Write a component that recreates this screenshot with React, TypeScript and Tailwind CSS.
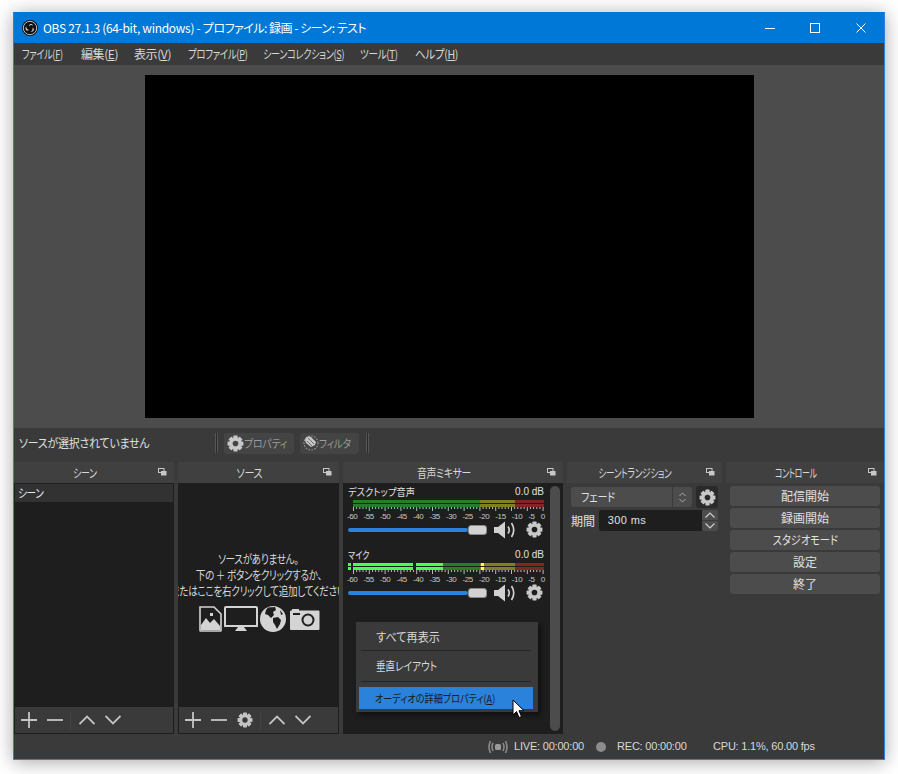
import React from "react";

const font = "font-['Noto_Sans_CJK_JP','Noto_Sans',sans-serif] [font-feature-settings:'palt']";

function Gear({ size = 18, color = "#c8c8c8", hole = "#2a2a2a" }: { size?: number; color?: string; hole?: string }) {
  const teeth = [0, 45, 90, 135];
  return (
    <svg width={size} height={size} viewBox="0 0 24 24" className="shrink-0">
      {teeth.map((a) => (
        <rect key={a} x="9" y="0.800" width="6" height="22.400" rx="1" fill={color} transform={`rotate(${a} 12 12)`} />
      ))}
      <circle cx="12" cy="12" r="8.600" fill={color} />
      <circle cx="12" cy="12" r="4" fill={hole} />
    </svg>
  );
}

function Speaker() {
  return (
    <svg width="24" height="18" viewBox="0 0 24 18" className="shrink-0">
      <path d="M1 6h4l7-5.500v17l-7-5.500H1z" fill="#d0d0d0" />
      <path d="M15 5.500q2.500 3.500 0 7" stroke="#d0d0d0" strokeWidth="1.700" fill="none" />
      <path d="M18.500 2q4.500 7 0 14" stroke="#d0d0d0" strokeWidth="1.700" fill="none" />
    </svg>
  );
}

function DockIcon() {
  return (
    <svg width="9" height="8" viewBox="0 0 9 8" className="shrink-0">
      <rect x="0.500" y="0.500" width="5.500" height="4" fill="#3f3f3f" stroke="#c8c8c8" />
      <rect x="3" y="3" width="5.500" height="4.500" fill="#c8c8c8" />
    </svg>
  );
}

function Dock({ title, className, children }: { title: React.ReactNode; className: string; children: React.ReactNode }) {
  return (
    <div className={`flex flex-col ${className}`}>
      <div className="h-[21px] shrink-0 bg-[#404040] flex items-center justify-center relative pr-[19px] text-[12px] leading-none text-[#d8d8d8] tracking-[-0.4px] whitespace-nowrap">
        {title}
        <span className="absolute right-[7px] top-[6px]"><DockIcon /></span>
      </div>
      {children}
    </div>
  );
}

function Glyph({ d }: { d: string }) {
  return (
    <svg width="16" height="16" viewBox="0 0 16 16" className="shrink-0">
      <path d={d} stroke="#c4c4c4" strokeWidth="1.800" fill="none" />
    </svg>
  );
}

function FooterBar({ gear }: { gear?: boolean }) {
  return (
    <div className="h-[27px] shrink-0 bg-[#3a3a3a] border border-t-0 border-[#1e1e1e] flex items-center pl-[6px]">
      <Glyph d="M8 0v16M0 8h16" />
      <span className="ml-[10px]"><Glyph d="M0 8h16" /></span>
      {gear && <span className="ml-[10px]"><Gear size={16} color="#c4c4c4" hole="#3a3a3a" /></span>}
      <span className="w-px h-[19px] bg-[#444] ml-[7px]" />
      <span className="ml-[8px]"><Glyph d="M0.500 12l7.500-7.500 7.500 7.500" /></span>
      <span className="ml-[10px]"><Glyph d="M0.500 4l7.500 7.500 7.500-7.500" /></span>
    </div>
  );
}

function Meter({ active }: { active?: boolean }) {
  const labels = ["-60", "-55", "-50", "-45", "-40", "-35", "-30", "-25", "-20", "-15", "-10", "-5", "0"];
  return (
    <div className="relative">
      <div className="h-[7px] flex flex-col justify-between ml-[10px] w-[191px]">
        {[0, 1].map((i) => (
          <div key={i} className="h-[3px] flex relative">
            <div className="w-[127px] bg-[#267f26]" />
            <div className="w-[35px] bg-[#7f7f26]" />
            <div className="w-[29px] bg-[#7f2626]" />
            {active && (
              <>
                <div className="absolute left-0 top-0 h-full w-[90px] bg-[#4cff4c]" />
                <div className="absolute left-[128px] top-0 h-full w-[3px] bg-[#ffff4c]" />
              </>
            )}
          </div>
        ))}
        {active && (
          <>
            <div className="absolute left-[5px] top-0 w-[3px] h-[3px] bg-[#4cff4c]" />
            <div className="absolute left-[5px] top-[4px] w-[3px] h-[3px] bg-[#4cff4c]" />
            <div className="absolute left-[8px] top-0 w-[2px] h-[7px] bg-[#1e1e1e]" />
            <div className="absolute left-[70px] top-0 w-[3px] h-[7px] bg-[#1e1e1e]" />
          </>
        )}
      </div>
      <svg width="192" height="4" viewBox="0 0 192 4" className="block ml-[10px]">
        {Array.from({ length: 61 }).map((_, i) => (
          <rect key={i} x={i * 3.16} y="0" width="1" height={i % 5 === 0 ? 4 : 2} fill="#b8b8b8" />
        ))}
      </svg>
      <div className="flex justify-between w-[198px] text-[8px] leading-[9px] text-[#c8c8c8] ml-[4px] mt-[1px] tracking-[-0.4px] font-['Liberation_Sans',sans-serif]">
        {labels.map((l) => <span key={l}>{l}</span>)}
      </div>
    </div>
  );
}

function Channel({ name, active, extra }: { name: React.ReactNode; active?: boolean; extra?: string }) {
  return (
    <div className={extra}>
      <div className="flex justify-between h-[13px] items-center pl-[5px] pr-[6px] text-[10px] text-[#e0e0e0]">
        {name}
        <span className="font-['Liberation_Sans',sans-serif]">0.0 dB</span>
      </div>
      <div className="mt-[2px]"><Meter active={active} /></div>
      <div className="flex items-center h-[17px] pl-[5px]">
        <div className="w-[120px] h-[4px] rounded-full bg-[#2a82da]" />
        <div className="w-[19px] h-[10px] rounded-[3px] bg-[#d2d2d2] border border-[#8a8a8a]" />
        <span className="ml-[6px]"><Speaker /></span>
        <span className="ml-[9px]"><Gear size={17} color="#c8c8c8" hole="#1e1e1e" /></span>
      </div>
    </div>
  );
}

function ControlButton({ children }: { children: React.ReactNode }) {
  return (
    <div className="h-[20px] rounded-[3px] bg-[#4c4c4c] flex items-center justify-center text-[12px] leading-none text-[#e0e0e0]">{children}</div>
  );
}

function SourceIcons() {
  const c = "#d4d4d4";
  const h = "#1e1e1e";
  return (
    <div className="flex items-center mt-[7px] ml-[2px]">
      <svg width="23" height="26" viewBox="0 0 23 26" className="shrink-0">
        <path d="M1 1h14l7 7v16.500a.5.5 0 0 1-.5.500H1.500a.5.5 0 0 1-.5-.500z" fill={h} stroke={c} strokeWidth="1.600" />
        <path d="M2 24v-5l5-7 4 5 4-4 6 7v4z" fill={c} />
        <rect x="11" y="7" width="3" height="3" fill={c} />
      </svg>
      <svg width="34" height="26" viewBox="0 0 34 26" className="ml-[2px] shrink-0">
        <rect x="1" y="1" width="32" height="19" rx="1" fill={h} stroke={c} strokeWidth="2" />
        <path d="M0 20h34v1H0zM14 21h6l3 4H11z" fill={c} />
      </svg>
      <svg width="26" height="26" viewBox="0 0 26 26" className="ml-[2px] shrink-0">
        <circle cx="13" cy="13" r="13" fill={c} />
        <path d="M8 1.500l7-.5 1 3-3 2 1 3-3 3-3-3-3-1 1-4zM13 12l5-1 3 3-1 4-3 5-2-4-2-3zM20 4l3 4-2 1z" fill={h} />
      </svg>
      <svg width="31" height="22" viewBox="0 0 31 22" className="ml-[3px] shrink-0">
        <path d="M1 3.500a1 1 0 0 1 1-1h1v-1.500h7v1.500h19.500a1 1 0 0 1 1 1V21a1 1 0 0 1-1 1H2a1 1 0 0 1-1-1z" fill={c} />
        <circle cx="19" cy="12" r="5.500" fill={c} stroke={h} strokeWidth="2" />
        <rect x="4" y="5" width="7" height="2" fill={h} />
      </svg>
    </div>
  );
}

export default function App() {
  return (
    <div className={`w-[898px] h-[774px] bg-white pl-[13px] pt-[12px] ${font}`}>
      <div className="w-[872px] h-[748px] flex flex-col border border-[#2a82da] border-t-[#0078d7] shadow-[0_2px_18px_rgba(0,0,0,0.35)] bg-[#3a3a3a]">
        <div className="h-[30px] shrink-0 bg-[#0078d7] flex items-center text-white pl-[8px] text-[12px]">
          <svg width="16" height="16" viewBox="0 0 16 16" className="shrink-0">
            <circle cx="8" cy="8" r="8" fill="#111" />
            <circle cx="8" cy="8" r="6.700" fill="none" stroke="#e8e8e8" strokeWidth="0.800" />
            <path d="M8 4.200a3 3 0 0 1 3.400 1.600a3.600 3.600 0 0 0-4.600 0.500a3 3 0 0 1 1.200-2.100z" fill="#e8e8e8" />
            <path d="M11.900 9.600a3 3 0 0 1-3.300 2.200a3.600 3.600 0 0 0 1.900-4.200a3 3 0 0 1 1.400 2z" fill="#e8e8e8" />
            <path d="M4.200 10.300a3 3 0 0 1 0-4a3.600 3.600 0 0 0 2.700 3.700a3 3 0 0 1-2.700 0.300z" fill="#e8e8e8" />
          </svg>
          <span className="ml-[5px] tracking-[-0.3px] whitespace-nowrap">OBS 27.1.3 (64-bit, windows) - <span className="tracking-[-0.5px]">プロファイル: 録画 - シーン: テスト</span></span>
          <div className="ml-auto flex items-center">
            <span className="w-[10px] h-px bg-white" />
            <span className="w-[10px] h-[10px] border border-white ml-[35px]" />
            <svg width="10" height="10" viewBox="0 0 10 10" className="ml-[36px] mr-[18px]">
              <path d="M0.500 0.500l9 9M9.500 0.500l-9 9" stroke="#fff" strokeWidth="1" />
            </svg>
          </div>
        </div>
        <div className="h-[22px] shrink-0 bg-[#3a3a3a] flex items-center text-[12px] text-[#d8d8d8] tracking-[-0.4px] whitespace-nowrap">
          <span className="ml-[8px] w-[41px] origin-left scale-x-[0.76]">ファイル(<u>F</u>)</span>
          <span className="ml-[18px] w-[36px]">編集(<u>E</u>)</span>
          <span className="ml-[17px] w-[38px]">表示(<u>V</u>)</span>
          <span className="ml-[16px] w-[59px] origin-left scale-x-[0.78]">プロファイル(<u>P</u>)</span>
          <span className="ml-[16px] w-[80px] origin-left scale-x-[0.76]">シーンコレクション(<u>S</u>)</span>
          <span className="ml-[17px] w-[38px] origin-left scale-x-[0.8]">ツール(<u>T</u>)</span>
          <span className="ml-[17px] w-[43px] origin-left scale-x-[0.88]">ヘルプ(<u>H</u>)</span>
        </div>
        <div className="h-[363px] shrink-0 bg-[#4c4c4c] pl-[131px] pt-[10px]">
          <div className="w-[609px] h-[343px] bg-black" />
        </div>
        <div className="h-[30px] shrink-0 bg-[#3a3a3a] flex items-center text-[#e0e0e0] whitespace-nowrap">
          <span className="ml-[5px] w-[196px] text-[12px] tracking-[-0.2px] origin-left scale-x-[0.91]">ソースが選択されていません</span>
          <span className="w-[3px] h-[20px] bg-[#2a2a2a] border-x border-[#555]" />
          <div className="ml-[6px] w-[70px] h-[21px] rounded-[3px] bg-[#444] flex items-center pl-[3px] text-[11px] text-[#9a9a9a] tracking-[-0.2px]">
            <Gear size={17} color="#c8c8c8" hole="#444" />
            <span className="origin-left scale-x-[0.9]">プロパティ</span>
          </div>
          <div className="ml-[6px] w-[59px] h-[21px] rounded-[3px] bg-[#444] flex items-center pl-[3px] text-[11px] text-[#9a9a9a] tracking-[-0.2px]">
            <svg width="16" height="16" viewBox="0 0 16 16" className="shrink-0">
              <circle cx="8" cy="8" r="7" fill="none" stroke="#999" strokeWidth="1.200" strokeDasharray="1.500 1.500" />
              <path d="M2 5a4 4 0 0 1 6-3l5 5-1 3-4 2-5-4z" fill="#c8c8c8" />
              <path d="M5 3l6 6M4 6l5 5" stroke="#444" strokeWidth="0.700" />
            </svg>
            <span className="origin-left scale-x-[0.87]">フィルタ</span>
          </div>
          <span className="ml-[7px] w-[3px] h-[20px] bg-[#2a2a2a] border-x border-[#555]" />
        </div>
        <div className="mt-[4px] h-[272px] shrink-0 flex gap-[4px] relative">
          <Dock title={<span className="scale-x-[0.75]">シーン</span>} className="w-[160px]">
            <div className="flex-1 bg-[#1e1e1e] border border-[#1e1e1e] border-b-0">
              <div className="h-[18px] bg-[#323232] flex items-center pl-[3px] text-[12px] text-[#e8e8e8] tracking-[-0.4px]">
                <span className="origin-left scale-x-[0.8]">シーン</span>
              </div>
            </div>
            <FooterBar />
          </Dock>
          <Dock title={<span className="scale-x-[0.84]">ソース</span>} className="w-[161px]">
            <div className="flex-1 bg-[#1e1e1e] flex flex-col items-center pt-[68px] overflow-hidden">
              <div className="text-[12px] leading-[16px] text-[#d8d8d8] text-center tracking-[-0.4px] whitespace-nowrap w-full flex flex-col items-center">
                <span className="scale-x-[0.8]">ソースがありません。</span>
                <span className="scale-x-[0.8]">下の ＋ ボタンをクリックするか、</span>
                <div className="w-[161px] flex justify-center overflow-hidden">
                  <span className="shrink-0 scale-x-[0.8]">またはここを右クリックして追加してください</span>
                </div>
              </div>
              <SourceIcons />
            </div>
            <FooterBar gear />
          </Dock>
          <Dock title={<span className="scale-x-[0.82]">音声ミキサー</span>} className="w-[220px]">
            <div className="flex-1 bg-[#1e1e1e] flex">
              <div className="flex-1 pt-[2px]">
                <Channel name={<span className="tracking-[0.1px] origin-left scale-x-[0.92]">デスクトップ音声</span>} />
                <Channel name={<span className="tracking-[0.1px] origin-left scale-x-[0.8]">マイク</span>} active extra="mt-[10px]" />
              </div>
              <div className="w-[10px] mr-[3px] mt-[3px] mb-[3px] bg-[#4c4c4c] rounded-full" />
            </div>
          </Dock>
          <Dock title={<span className="scale-x-[0.72]">シーントランジション</span>} className="w-[155px]">
            <div className="flex-1 bg-[#3a3a3a] px-[4px] pt-[3px] text-[12px] text-[#e0e0e0]">
              <div className="flex items-center gap-[4px]">
                <div className="w-[121px] h-[20px] rounded-[3px] bg-[#4c4c4c] flex items-center pl-[10px]">
                  <span className="flex-1 origin-left scale-x-[0.83]">フェード</span>
                  <span className="w-[20px] h-full border-l border-[#3a3a3a] flex flex-col items-center justify-center gap-[3px]">
                    <svg width="7" height="4" viewBox="0 0 7 4"><path d="M0.500 4l3-3 3 3" stroke="#aaa" fill="none" /></svg>
                    <svg width="7" height="4" viewBox="0 0 7 4"><path d="M0.500 0l3 3 3-3" stroke="#aaa" fill="none" /></svg>
                  </span>
                </div>
                <span className="w-[22px] h-[22px] rounded-[3px] bg-[#2a2a2a] flex items-center justify-center"><Gear size={17} color="#c8c8c8" hole="#2a2a2a" /></span>
              </div>
              <div className="flex items-center mt-[2px]">
                <span className="w-[28px]">期間</span>
                <div className="w-[104px] h-[21px] rounded-l-[3px] bg-[#1e1e1e] flex items-center pl-[9px] text-[11px] font-['Liberation_Sans',sans-serif] tracking-[0.4px]">300 ms</div>
                <div className="w-[16px] h-[21px] flex flex-col justify-between">
                  <span className="h-[10px] bg-[#4c4c4c] rounded-t-[2px] flex items-center justify-center">
                    <svg width="10" height="6" viewBox="0 0 10 6"><path d="M0.500 5.500l4.500-4.500 4.500 4.500" stroke="#d0d0d0" strokeWidth="1.200" fill="none" /></svg>
                  </span>
                  <span className="h-[10px] bg-[#4c4c4c] rounded-b-[2px] flex items-center justify-center">
                    <svg width="10" height="6" viewBox="0 0 10 6"><path d="M0.500 0.500l4.500 4.500 4.500-4.500" stroke="#d0d0d0" strokeWidth="1.200" fill="none" /></svg>
                  </span>
                </div>
              </div>
            </div>
          </Dock>
          <Dock title={<span className="scale-x-[0.66]">コントロール</span>} className="w-[158px]">
            <div className="flex-1 bg-[#3a3a3a] pl-[4px] pr-[4px] pt-[3px] flex flex-col gap-[2px]">
              <ControlButton>配信開始</ControlButton>
              <ControlButton>録画開始</ControlButton>
              <ControlButton><span className="scale-x-[0.85]">スタジオモード</span></ControlButton>
              <ControlButton>設定</ControlButton>
              <ControlButton>終了</ControlButton>
            </div>
          </Dock>
          <div className="absolute left-[342px] top-[160px] w-[182px] h-[90px] bg-[#3a3a3a] shadow-[3px_3px_5px_rgba(0,0,0,0.5)] pl-[3px] pr-[5px] pt-[3px] text-[12px] text-[#d8d8d8]">
            <div className="h-[25px] flex items-center pl-[17px] pb-[2px]"><span className="origin-left scale-x-[0.93]">すべて再表示</span></div>
            <div className="h-px bg-[#252525] mx-[2px]" />
            <div className="h-[30px] flex items-center pl-[17px]"><span className="origin-left scale-x-[0.8]">垂直レイアウト</span></div>
            <div className="h-px bg-[#252525] mx-[2px]" />
            <div className="mt-[5px] h-[22px] bg-[#2a82da] flex items-center pl-[16px] text-[11px] text-[#1a1a1a] whitespace-nowrap"><span className="origin-left scale-x-[0.83]">オーディオの詳細プロパティ(<u>A</u>)</span></div>
          </div>
          <svg width="13" height="20" viewBox="0 0 13 20" className="absolute left-[498px] top-[237px]">
            <path d="M1 1v15l3.500-3.400 2.500 5.900 2.500-1-2.500-5.800h5z" fill="#fff" stroke="#000" strokeWidth="1" />
          </svg>
        </div>
        <div className="flex-1 bg-[#3a3a3a] flex items-center text-[11px] text-[#d8d8d8] font-['Liberation_Sans',sans-serif] tracking-[-0.2px] whitespace-nowrap">
          <svg width="20" height="14" viewBox="0 0 20 14" className="ml-[474px] shrink-0">
            <rect x="7" y="4" width="6" height="6" rx="1.500" fill="#9a9a9a" />
            <path d="M5 3q-2 4 0 8M15 3q2 4 0 8M2.500 1q-3 6 0 12M17.500 1q3 6 0 12" stroke="#8a8a8a" strokeWidth="1.600" fill="none" />
          </svg>
          <span className="ml-[6px] w-[70px]">LIVE: 00:00:00</span>
          <span className="ml-[12px] w-[10px] h-[10px] rounded-full bg-[#8c8c8c]" />
          <span className="ml-[11px] w-[69px]">REC: 00:00:00</span>
          <span className="ml-[27px]">CPU: 1.1%, 60.00 fps</span>
        </div>
      </div>
    </div>
  );
}
